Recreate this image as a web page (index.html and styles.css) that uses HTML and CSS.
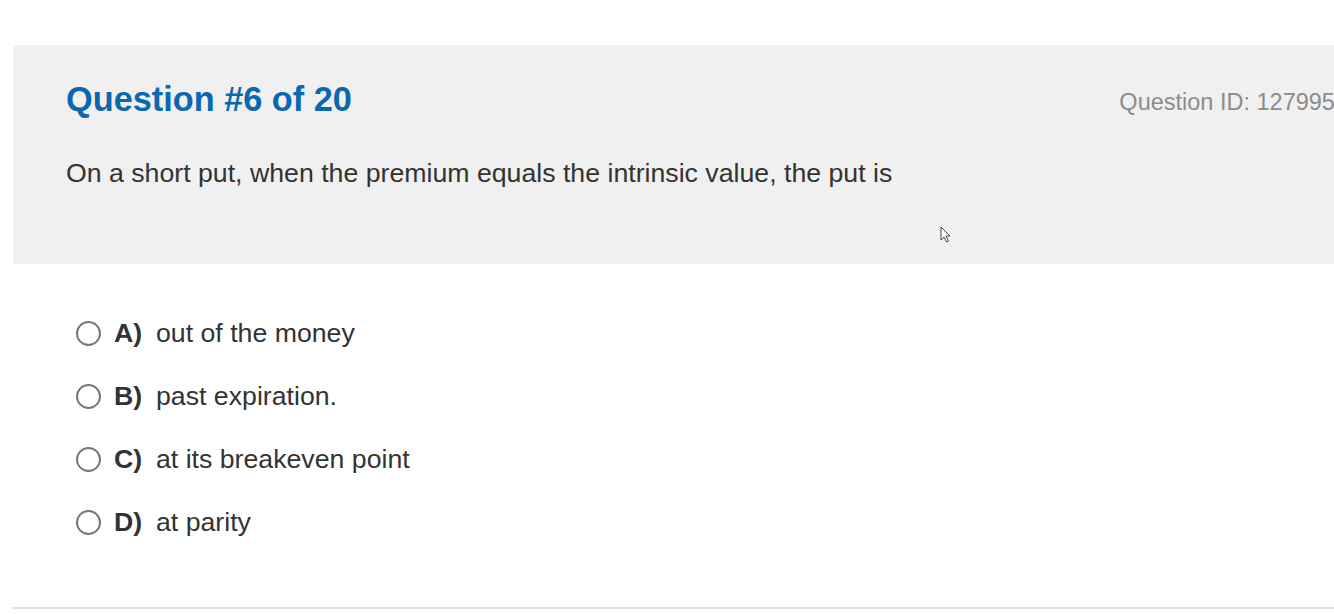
FILE: index.html
```html
<!DOCTYPE html>
<html>
<head>
<meta charset="utf-8">
<link rel="stylesheet" href="styles.css">
</head>
<body>
<div class="page">
  <section class="panel">
    <div class="panel-head">
      <h1 class="title">Question #6 of 20</h1>
      <span class="qid">Question ID: 1279951</span>
    </div>
    <p class="stem">On a short put, when the premium equals the intrinsic value, the put is</p>
    <svg class="cursor" width="12" height="18" viewBox="0 0 12 18"><path d="M1 1 L1 14 L4 11 L6.5 16 L8.5 15 L6 10 L10 10 Z" fill="#fff" stroke="#444" stroke-width="1"/></svg>
  </section>
  <ul class="options">
    <li class="option"><span class="radio"></span><span class="letter">A)</span><span class="answer">out of the money</span></li>
    <li class="option"><span class="radio"></span><span class="letter">B)</span><span class="answer">past expiration.</span></li>
    <li class="option"><span class="radio"></span><span class="letter">C)</span><span class="answer">at its breakeven point</span></li>
    <li class="option"><span class="radio"></span><span class="letter">D)</span><span class="answer">at parity</span></li>
  </ul>
  <div class="rule"></div>
</div>
</body>
</html>
```
FILE: styles.css
```css
html, body { margin: 0; padding: 0; background: #fff; }
body { font-family: "Liberation Sans", Arial, sans-serif; overflow: hidden; }
.page { padding: 45px 0 0 13px; width: 1321px; }
.panel {
  position: relative;
  background: #f0f0f0;
  height: 219px;
  box-sizing: border-box;
  padding: 36px 0 0 53px;
  overflow: hidden;
}
.panel-head { display: flex; align-items: baseline; justify-content: space-between; white-space: nowrap; }
.title { margin: 0; font-size: 34.3px; font-weight: bold; color: #0a67b0; line-height: 36px; }
.qid { font-size: 23.5px; color: #8c8c8c; margin-right: -14px; position: relative; top: -1px; }
.stem { margin: 41px 0 0; font-size: 26.7px; color: #333; line-height: 30px; }
.cursor { position: absolute; left: 927px; top: 181px; }
.options { list-style: none; margin: 0; padding: 38px 0 0 63px; }
.option { display: flex; align-items: center; height: 63px; font-size: 26.7px; color: #333; }
.radio {
  width: 21px; height: 21px; border: 2px solid #777; border-radius: 50%;
  box-sizing: content-box; background: #fff; margin-right: 13px;
}
.letter { font-weight: bold; width: 42px; }
.rule { height: 2px; background: #e0e0e0; margin-top: 53px; }
```
